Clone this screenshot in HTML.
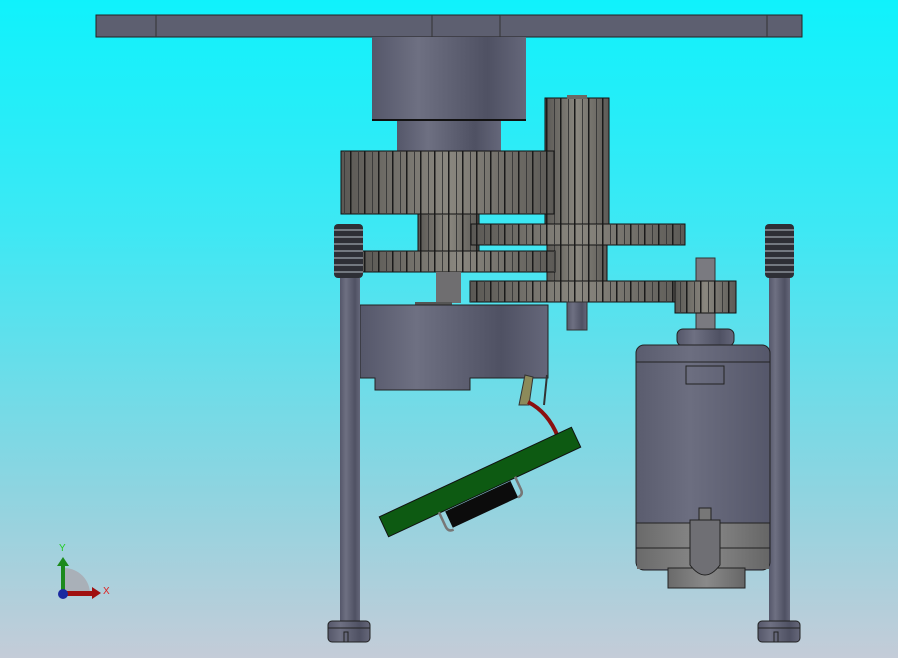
<!DOCTYPE html>
<html><head><meta charset="utf-8"><style>
html,body{margin:0;padding:0;width:898px;height:658px;overflow:hidden}
body{background:linear-gradient(#0ff2fc 0%,#3ee8f4 35%,#8fd4e0 75%,#c4ccd8 100%)}
svg{position:absolute;left:0;top:0}
</style></head><body>
<svg width="898" height="658" viewBox="0 0 898 658" xmlns="http://www.w3.org/2000/svg">
<defs>
<linearGradient id="cyl" x1="0" x2="1"><stop offset="0" stop-color="#55576a"/><stop offset=".3" stop-color="#6e7082"/><stop offset=".75" stop-color="#4f5163"/><stop offset="1" stop-color="#65677a"/></linearGradient>
<linearGradient id="gear" x1="0" x2="1"><stop offset="0" stop-color="#5a5854"/><stop offset=".5" stop-color="#8a877f"/><stop offset="1" stop-color="#5c5a56"/></linearGradient>
<pattern id="teeth" width="14" height="10" patternUnits="userSpaceOnUse"><rect x="0" width="1.5" height="10" fill="#1a1a1a"/><rect x="8" width="1" height="10" fill="#3a3a3a"/></pattern>
<linearGradient id="motor" x1="0" x2="1"><stop offset="0" stop-color="#5a5c6e"/><stop offset=".4" stop-color="#6c6e80"/><stop offset="1" stop-color="#55576a"/></linearGradient>
<linearGradient id="mlow" x1="0" x2="1"><stop offset="0" stop-color="#6a6a6a"/><stop offset=".5" stop-color="#8a8a8a"/><stop offset="1" stop-color="#666"/></linearGradient>
</defs>
<rect x="96" y="15" width="706" height="22" fill="#5d5f70" stroke="#222" stroke-width="1"/>
<g stroke="#333"><line x1="156" y1="15" x2="156" y2="37"/><line x1="432" y1="15" x2="432" y2="37"/><line x1="500" y1="15" x2="500" y2="37"/><line x1="767" y1="15" x2="767" y2="37"/></g>
<rect x="372" y="37" width="154" height="83" fill="url(#cyl)"/>
<line x1="372" y1="120" x2="526" y2="120" stroke="#111" stroke-width="2"/>
<rect x="397" y="121" width="104" height="31" fill="url(#cyl)"/>
<rect x="545" y="98" width="64" height="127" fill="url(#gear)" stroke="#111"/>
<rect x="545" y="98" width="64" height="127" fill="url(#teeth)"/>
<rect x="567" y="95" width="20" height="4" fill="#6a6864"/>
<rect x="547" y="225" width="60" height="57" fill="url(#gear)" stroke="#111"/>
<rect x="547" y="225" width="60" height="57" fill="url(#teeth)"/>
<rect x="341" y="151" width="213" height="63" fill="url(#gear)" stroke="#111"/>
<rect x="341" y="151" width="213" height="63" fill="url(#teeth)"/>
<rect x="418" y="214" width="61" height="38" fill="url(#gear)" stroke="#111"/>
<rect x="418" y="214" width="61" height="38" fill="url(#teeth)"/>
<rect x="471" y="224" width="214" height="21" fill="url(#gear)" stroke="#111"/>
<rect x="471" y="224" width="214" height="21" fill="url(#teeth)"/>
<rect x="362" y="251" width="193" height="21" fill="url(#gear)" stroke="#111"/>
<rect x="362" y="251" width="193" height="21" fill="url(#teeth)"/>
<rect x="436" y="272" width="25" height="31" fill="#6f6e70"/>
<rect x="696" y="258" width="19" height="72" fill="#7a7a80" stroke="#333"/>
<rect x="470" y="281" width="215" height="21" fill="url(#gear)" stroke="#111"/>
<rect x="470" y="281" width="215" height="21" fill="url(#teeth)"/>
<rect x="675" y="281" width="61" height="32" fill="url(#gear)" stroke="#111"/>
<rect x="675" y="281" width="61" height="32" fill="url(#teeth)"/>
<rect x="567" y="302" width="20" height="28" fill="url(#cyl)" stroke="#333"/>
<rect x="415" y="302" width="37" height="4" fill="#555"/>
<path d="M360 305 H548 V378 H470 V390 H375 V378 H360 Z" fill="url(#cyl)" stroke="#222"/>
<rect x="340" y="278" width="20" height="345" fill="url(#cyl)"/>
<rect x="769" y="278" width="21" height="345" fill="url(#cyl)"/>
<rect x="334" y="224" width="29" height="54" rx="4" fill="#2e2f36"/>
<rect x="765" y="224" width="29" height="54" rx="4" fill="#2e2f36"/>
<g stroke="#8a9098" stroke-width="1.5">
<path d="M334 230h29M334 237h29M334 244h29M334 251h29M334 258h29M334 265h29M334 272h29"/>
<path d="M765 230h29M765 237h29M765 244h29M765 251h29M765 258h29M765 265h29M765 272h29"/>
</g>
<rect x="328" y="621" width="42" height="21" rx="4" fill="url(#cyl)" stroke="#222"/>
<rect x="758" y="621" width="42" height="21" rx="4" fill="url(#cyl)" stroke="#222"/>
<path d="M328 628h42M758 628h42M344 642v-10h4v10M774 642v-10h4v10" stroke="#222" fill="none"/>
<rect x="677" y="329" width="57" height="17" rx="6" fill="url(#cyl)" stroke="#222"/>
<rect x="636" y="345" width="134" height="225" rx="8" fill="url(#motor)" stroke="#222"/>
<line x1="636" y1="362" x2="770" y2="362" stroke="#222"/>
<rect x="686" y="366" width="38" height="18" fill="none" stroke="#222"/>
<rect x="637" y="523" width="132" height="46" fill="url(#mlow)"/>
<path d="M636 523h134M636 548h134" stroke="#222"/>
<rect x="668" y="568" width="77" height="20" fill="url(#mlow)" stroke="#222"/>
<path d="M690 520h30v45q-15 20-30 0z" fill="#6f6f74" stroke="#222"/>
<rect x="699" y="508" width="12" height="12" fill="#777" stroke="#222"/>
<path d="M525 375 l-6 30 h10 l4 -28z" fill="#8c8a5a" stroke="#333"/>
<path d="M528 402 q20 10 30 35" stroke="#8b1010" stroke-width="4" fill="none"/>
<path d="M547 375 l-3 30" stroke="#333" stroke-width="2"/>
<g transform="translate(480,482) rotate(-25)">
<rect x="-106" y="-11" width="212" height="22" fill="#0d5a12" stroke="#111"/>
<rect x="-44" y="12" width="72" height="18" fill="#0c0c0c"/>
<path d="M-50 10 v16 q0 6 6 6 M34 10 v14 q0 6 -6 6" stroke="#777" stroke-width="2.5" fill="none"/>
</g>
<path d="M64 568 a26 26 0 0 1 26 26 h-26z" fill="#a9b0b8"/>
<rect x="61" y="564" width="4" height="30" fill="#1c8a1c"/>
<path d="M57 566 l6 -9 l6 9z" fill="#1c8a1c"/>
<rect x="63" y="591" width="30" height="5" fill="#a01010"/>
<path d="M92 587 l9 6 l-9 6z" fill="#a01010"/>
<circle cx="63" cy="594" r="5" fill="#1a2aa0"/>
<text x="59" y="551" font-family="Liberation Sans, sans-serif" font-size="10" fill="#2c2">Y</text>
<text x="103" y="594" font-family="Liberation Sans, sans-serif" font-size="10" fill="#d22">X</text>
</svg>
</body></html>
